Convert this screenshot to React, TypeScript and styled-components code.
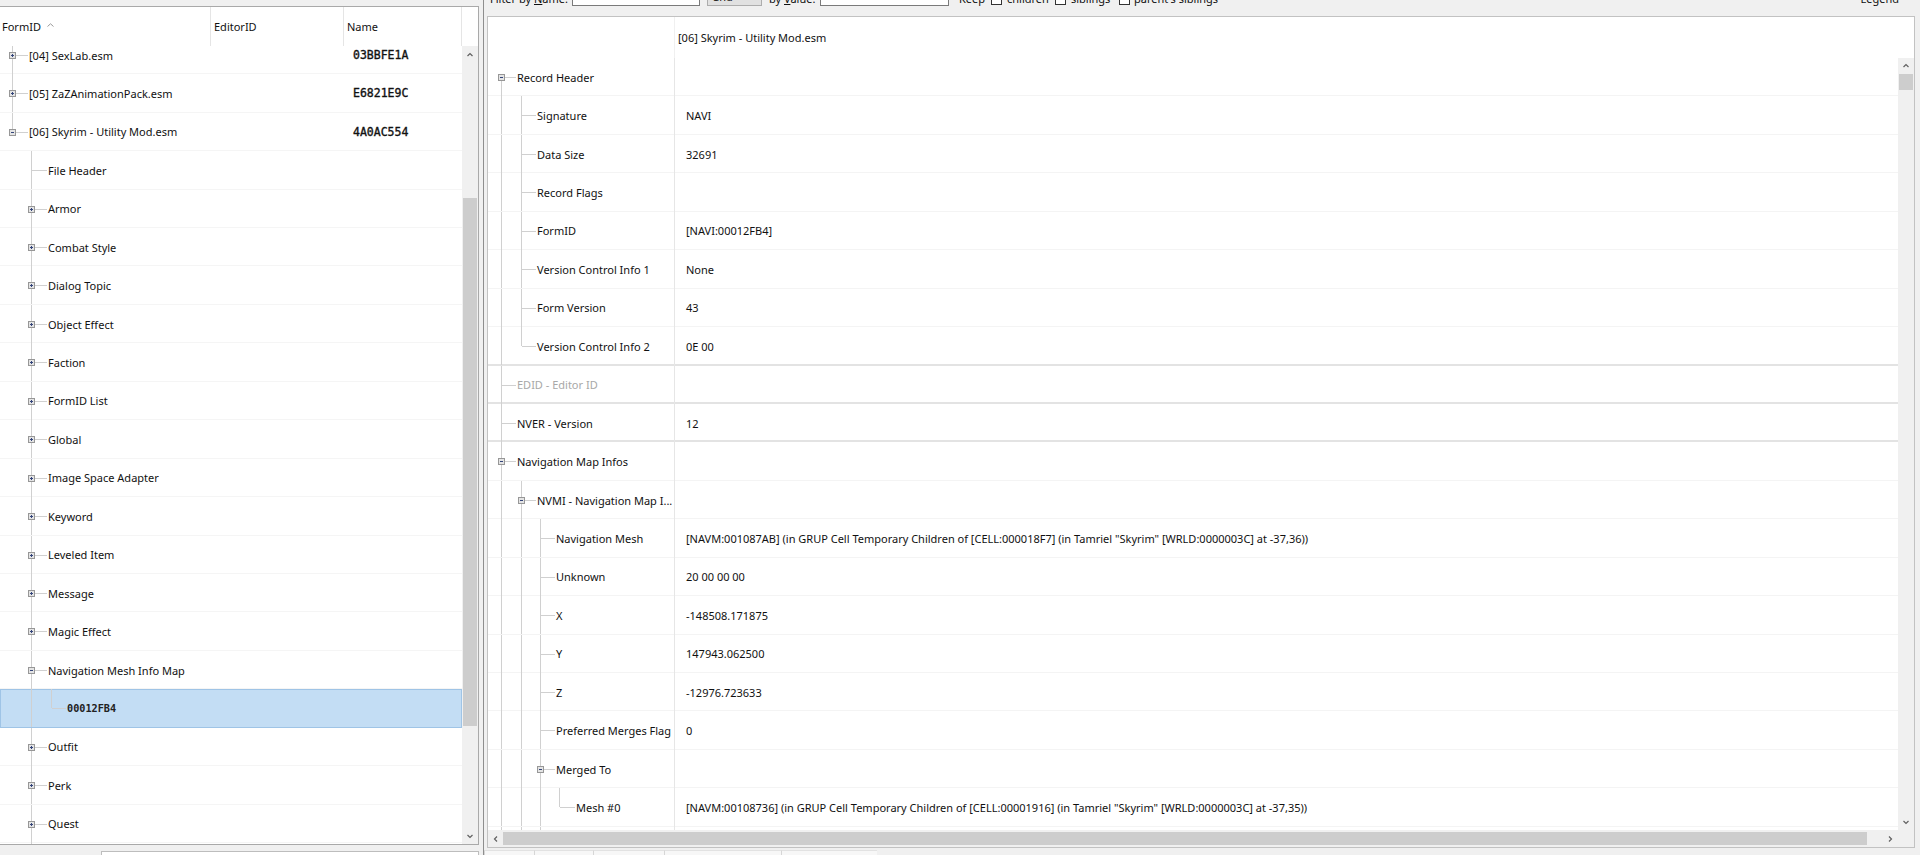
import React from "react";
import styled, { createGlobalStyle, css } from "styled-components";

const ROW = 38.45;
const UI = `"Noto Sans", "Segoe UI", sans-serif`;
const MONO = `"DejaVu Sans Mono", "Liberation Mono", monospace`;

const GlobalStyle = createGlobalStyle`
  * { box-sizing: border-box; }
  html, body { margin: 0; padding: 0; background: #f0f0f0; overflow: hidden; }
  body { font-family: ${UI}; font-size: 11px; color: #111; }
`;

const Window = styled.div`
  display: flex;
  width: 1920px;
  height: 855px;
  overflow: hidden;
  background: #f0f0f0;
`;

/* ---------------- shared bits ---------------- */

type Dir = "up" | "down" | "left" | "right";
const chevronPaths: Record<Dir, string> = {
  up: "M1.5 5 L4 2.5 L6.5 5",
  down: "M1.5 3 L4 5.5 L6.5 3",
  left: "M5 1.5 L2.5 4 L5 6.5",
  right: "M3 1.5 L5.5 4 L3 6.5",
};
const Chevron = ({ dir }: { dir: Dir }) => (
  <svg width="8" height="8" viewBox="0 0 8 8">
    <path d={chevronPaths[dir]} fill="none" stroke="#606060" strokeWidth="1.2" />
  </svg>
);

const VScroll = styled.div<{ $w: number }>`
  width: ${(p) => p.$w}px;
  flex: none;
  display: flex;
  flex-direction: column;
  background: #f0f0f0;
`;
const HScroll = styled.div`
  height: 17px;
  flex: none;
  display: flex;
  background: #f0f0f0;
`;
const ArrowBox = styled.div<{ $size: number; $horiz?: boolean }>`
  flex: none;
  ${(p) => (p.$horiz ? css`width: ${p.$size}px;` : css`height: ${p.$size}px;`)}
  display: flex;
  align-items: center;
  justify-content: center;
`;
const Track = styled.div<{ $horiz?: boolean }>`
  flex: 1;
  min-width: 0;
  min-height: 0;
  display: flex;
  flex-direction: ${(p) => (p.$horiz ? "row" : "column")};
`;
const VThumb = styled.div<{ $offset: number; $len: number }>`
  flex: none;
  margin: ${(p) => p.$offset}px 1px 0 1px;
  height: ${(p) => p.$len}px;
  background: #cdcdcd;
`;
const HThumb = styled.div<{ $offset: number; $len: number }>`
  flex: none;
  margin: 2px 0 2px ${(p) => p.$offset}px;
  width: ${(p) => p.$len}px;
  background: #cdcdcd;
`;
const Corner = styled.div`
  width: 16px;
  flex: none;
  background: #f0f0f0;
`;

/* ---------------- tree connector drawing ---------------- */

const GutterSvg = styled.svg`
  flex: none;
  display: block;
  height: 100%;
  overflow: visible;
`;

type GutterProps = {
  xs: number[];
  tx: number[];
  level: number;
  cont: boolean[];
  last?: boolean;
  first?: boolean;
  box?: "+" | "-";
};

const Gutter = ({ xs, tx, level, cont, last, first, box }: GutterProps) => {
  const w = tx[level];
  const c = xs[level];
  const cx = c + 0.5;
  return (
    <GutterSvg width={w} shapeRendering="crispEdges">
      <g stroke="#d0d0d0" strokeWidth="1">
        {cont.map((on, k) =>
          on ? <line key={k} x1={xs[k] + 0.5} x2={xs[k] + 0.5} y1="0" y2="100%" /> : null
        )}
        {!first && <line x1={cx} x2={cx} y1="0" y2="50%" />}
        {!last && <line x1={cx} x2={cx} y1="50%" y2="100%" />}
      </g>
      <svg x="0" y="50%" overflow="visible">
        <line x1={cx} x2={w - 1.5} y1={0.5} y2={0.5} stroke="#d0d0d0" />
        {box && (
          <g>
            <rect x={c - 2.5} y={-2.5} width={6} height={6} fill="#e4e4e4" stroke="#979797" />
            <line x1={c - 1} x2={c + 2} y1={0.5} y2={0.5} stroke="#34457a" />
            {box === "+" && <line x1={cx} x2={cx} y1={-1} y2={2} stroke="#34457a" />}
          </g>
        )}
      </svg>
    </GutterSvg>
  );
};

/* ---------------- left pane ---------------- */

const LeftPane = styled.div`
  width: 479px;
  flex: none;
  display: flex;
  flex-direction: column;
  padding-top: 6px;
`;
const ListFrame = styled.div`
  height: 839px;
  flex: none;
  display: flex;
  flex-direction: column;
  background: #fff;
  border: 1px solid #a9a9a9;
  border-left: 0;
`;
const ColHeader = styled.div`
  height: 39px;
  flex: none;
  display: flex;
`;
const HeadCell = styled.div<{ $w: number; $pad?: number }>`
  width: ${(p) => p.$w}px;
  flex: none;
  display: flex;
  align-items: center;
  padding-left: ${(p) => p.$pad ?? 3}px;
  border-right: 1px solid #e5e5e5;
  color: #111;
  white-space: nowrap;
`;
const SortMark = styled.svg`
  margin-left: 6px;
  margin-top: -3px;
`;
const ListBody = styled.div`
  flex: 1;
  min-height: 0;
  display: flex;
`;
const Viewport = styled.div<{ $w: number }>`
  width: ${(p) => p.$w}px;
  flex: none;
  overflow: hidden;
`;
const Scrolled = styled.div<{ $offset: number }>`
  margin-top: ${(p) => -p.$offset}px;
`;

const sepLine = (color: string, w: number) => css`
  background-image: linear-gradient(${color}, ${color});
  background-size: 100% ${w}px;
  background-position: 0 100%;
  background-repeat: no-repeat;
`;

const LRow = styled.div<{ $sel?: boolean }>`
  height: ${ROW}px;
  display: flex;
  ${sepLine("#f5f5f5", 1)}
  ${(p) =>
    p.$sel &&
    css`
      background-color: #c3ddf4;
      background-image: none;
      box-shadow: inset 0 0 0 1px #9fc4e6;
    `}
`;
const LTreeCell = styled.div`
  width: 344px;
  flex: none;
  display: flex;
  overflow: hidden;
`;
const LLabel = styled.span<{ $mono?: boolean }>`
  align-self: center;
  white-space: nowrap;
  ${(p) =>
    p.$mono &&
    css`
      font-family: ${MONO};
      font-size: 10.2px;
      font-weight: 700;
      color: #222;
    `}
`;
const LNameCell = styled.div`
  flex: 1;
  display: flex;
  align-items: center;
  padding-left: 9px;
  font-family: ${MONO};
  font-size: 11.5px;
  font-weight: 400;
  color: #111;
  -webkit-text-stroke: 0.35px #111;
`;

const LeftFooter = styled.div`
  flex: 1;
  padding: 6px 0 0 101px;
`;
const FooterInput = styled.div`
  height: 100%;
  border: 1px solid #bdbdbd;
  border-bottom: 0;
  background: #fff;
`;

const Splitter = styled.div`
  width: 4px;
  flex: none;
`;

/* ---------------- right pane ---------------- */

const RightPane = styled.div`
  flex: 1;
  display: flex;
  flex-direction: column;
  border-left: 1px solid #8e8e8e;
`;
const Toolbar = styled.div`
  height: 16px;
  flex: none;
  overflow: hidden;
  display: flex;
  align-items: flex-end;
  padding: 0 21px 0 6px;
`;
const TLabel = styled.span<{ $w?: number; $ml?: number }>`
  flex: none;
  ${(p) => p.$w && css`width: ${p.$w}px;`}
  margin-left: ${(p) => p.$ml ?? 0}px;
  line-height: 16px;
  margin-bottom: 9px;
  white-space: nowrap;
  color: #111;
`;
const TInput = styled.div<{ $w: number; $ml: number }>`
  flex: none;
  width: ${(p) => p.$w}px;
  margin-left: ${(p) => p.$ml}px;
  height: 21px;
  margin-bottom: 10px;
  border: 1px solid #7a7a7a;
  background: #fff;
`;
const TCombo = styled.div<{ $w: number; $ml: number }>`
  flex: none;
  width: ${(p) => p.$w}px;
  margin-left: ${(p) => p.$ml}px;
  height: 21px;
  margin-bottom: 10px;
  border: 1px solid #adadad;
  background: #e1e1e1;
  padding: 4px 0 0 5px;
  line-height: 14px;
  color: #111;
`;
const TCheck = styled.span<{ $ml: number }>`
  flex: none;
  width: 11px;
  height: 11px;
  margin-left: ${(p) => p.$ml}px;
  margin-bottom: 11px;
  border: 1px solid #333;
  background: #fff;
`;
const Legend = styled.span`
  flex: none;
  margin-left: auto;
  line-height: 16px;
  margin-bottom: 9px;
  color: #111;
`;

const TreeFrame = styled.div`
  height: 832px;
  flex: none;
  margin: 0 5px 0 3px;
  border: 1px solid #c2c2c2;
  background: #fff;
  display: flex;
  flex-direction: column;
`;
const TreeHeader = styled.div`
  height: 41px;
  flex: none;
  display: flex;
`;
const THLabel = styled.div`
  width: 186px;
  flex: none;
`;
const THValue = styled.div`
  flex: 1;
  display: flex;
  align-items: center;
  padding-left: 3px;
  border-left: 1px solid #f0f0f0;
  white-space: nowrap;
`;
const TreeBody = styled.div`
  height: 772px;
  flex: none;
  display: flex;
`;
const RRow = styled.div<{ $root?: boolean }>`
  height: ${ROW}px;
  display: flex;
  ${(p) => (p.$root ? sepLine("#e3e3e3", 2) : sepLine("#f4f4f4", 1))}
`;
const RLabelCell = styled.div`
  width: 186px;
  flex: none;
  display: flex;
  overflow: hidden;
`;
const RLabel = styled.span<{ $muted?: boolean }>`
  align-self: center;
  white-space: nowrap;
  color: ${(p) => (p.$muted ? "#a8a8a8" : "#111")};
`;
const RValueCell = styled.div`
  flex: 1;
  display: flex;
  align-items: center;
  padding-left: 11px;
  border-left: 1px solid #e6e6e6;
  white-space: nowrap;
  overflow: hidden;
`;

const TabStrip = styled.div`
  flex: 1;
  display: flex;
  padding-top: 2px;
`;
const TabItem = styled.div<{ $w: number }>`
  width: ${(p) => p.$w}px;
  flex: none;
  border-left: 1px solid #d6d6d6;
  border-top: 1px solid #e2e2e2;
  background: #f7f7f7;
`;

/* ---------------- data ---------------- */

type LeftItem = {
  level: number;
  label: string;
  box?: "+" | "-";
  hex?: string;
  mono?: boolean;
  selected?: boolean;
  cont: boolean[];
  last?: boolean;
};

const L1 = (label: string, box?: "+" | "-"): LeftItem => ({ level: 1, label, box, cont: [false] });

const leftRows: LeftItem[] = [
  { level: 0, label: "[04] SexLab.esm", box: "+", hex: "03BBFE1A", cont: [] },
  { level: 0, label: "[05] ZaZAnimationPack.esm", box: "+", hex: "E6821E9C", cont: [] },
  { level: 0, label: "[06] Skyrim - Utility Mod.esm", box: "-", hex: "4A0AC554", cont: [], last: true },
  L1("File Header"),
  L1("Armor", "+"),
  L1("Combat Style", "+"),
  L1("Dialog Topic", "+"),
  L1("Object Effect", "+"),
  L1("Faction", "+"),
  L1("FormID List", "+"),
  L1("Global", "+"),
  L1("Image Space Adapter", "+"),
  L1("Keyword", "+"),
  L1("Leveled Item", "+"),
  L1("Message", "+"),
  L1("Magic Effect", "+"),
  L1("Navigation Mesh Info Map", "-"),
  { level: 2, label: "00012FB4", mono: true, selected: true, cont: [false, true], last: true },
  L1("Outfit", "+"),
  L1("Perk", "+"),
  L1("Quest", "+"),
  L1("", "+"),
];

type RightItem = {
  level: number;
  label: string;
  value?: string;
  box?: "+" | "-";
  cont: boolean[];
  last?: boolean;
  first?: boolean;
  muted?: boolean;
  root?: boolean;
};

const R1 = (label: string, value: string, extra: Partial<RightItem> = {}): RightItem => ({
  level: 1,
  label,
  value,
  cont: [true],
  ...extra,
});
const R2 = (label: string, value: string, extra: Partial<RightItem> = {}): RightItem => ({
  level: 2,
  label,
  value,
  cont: [true, true],
  ...extra,
});

const rightRows: RightItem[] = [
  { level: 0, label: "Record Header", box: "-", cont: [], first: true },
  R1("Signature", "NAVI"),
  R1("Data Size", "32691"),
  R1("Record Flags", ""),
  R1("FormID", "[NAVI:00012FB4]"),
  R1("Version Control Info 1", "None"),
  R1("Form Version", "43"),
  R1("Version Control Info 2", "0E 00", { last: true, root: true }),
  { level: 0, label: "EDID - Editor ID", value: "", cont: [], muted: true, root: true },
  { level: 0, label: "NVER - Version", value: "12", cont: [], root: true },
  { level: 0, label: "Navigation Map Infos", box: "-", cont: [] },
  R1("NVMI - Navigation Map I...", "", { box: "-" }),
  R2(
    "Navigation Mesh",
    '[NAVM:001087AB] (in GRUP Cell Temporary Children of [CELL:000018F7] (in Tamriel "Skyrim" [WRLD:0000003C] at -37,36))'
  ),
  R2("Unknown", "20 00 00 00"),
  R2("X", "-148508.171875"),
  R2("Y", "147943.062500"),
  R2("Z", "-12976.723633"),
  R2("Preferred Merges Flag", "0"),
  R2("Merged To", "", { box: "-" }),
  {
    level: 3,
    label: "Mesh #0",
    value:
      '[NAVM:00108736] (in GRUP Cell Temporary Children of [CELL:00001916] (in Tamriel "Skyrim" [WRLD:0000003C] at -37,35))',
    cont: [true, true, true],
    last: true,
  },
  R2("", "", { box: "+" }),
];

const LX = [12, 31, 51, 70];
const LT = [29, 48, 67, 86];
const RX = [13, 33, 52, 71];
const RT = [29, 49, 68, 88];

/* ---------------- app ---------------- */

export default function App() {
  return (
    <>
      <GlobalStyle />
      <Window>
        <LeftPane>
          <ListFrame>
            <ColHeader>
              <HeadCell $w={211} $pad={2}>
                FormID
                <SortMark width="7" height="4" viewBox="0 0 7 4">
                  <path d="M0.5 3.5 L3.5 0.8 L6.5 3.5" fill="none" stroke="#9a9a9a" strokeWidth="1" />
                </SortMark>
              </HeadCell>
              <HeadCell $w={133}>EditorID</HeadCell>
              <HeadCell $w={118}>Name</HeadCell>
            </ColHeader>
            <ListBody>
              <Viewport $w={462}>
                <Scrolled $offset={10.2}>
                  {leftRows.map((r, i) => (
                    <LRow key={i} $sel={r.selected}>
                      <LTreeCell>
                        <Gutter xs={LX} tx={LT} level={r.level} cont={r.cont} last={r.last} box={r.box} />
                        <LLabel $mono={r.mono}>{r.label}</LLabel>
                      </LTreeCell>
                      <LNameCell>{r.hex}</LNameCell>
                    </LRow>
                  ))}
                </Scrolled>
              </Viewport>
              <VScroll $w={16}>
                <ArrowBox $size={17}>
                  <Chevron dir="up" />
                </ArrowBox>
                <Track>
                  <VThumb $offset={135} $len={528} />
                </Track>
                <ArrowBox $size={17}>
                  <Chevron dir="down" />
                </ArrowBox>
              </VScroll>
            </ListBody>
          </ListFrame>
          <LeftFooter>
            <FooterInput />
          </LeftFooter>
        </LeftPane>

        <Splitter />

        <RightPane>
          <Toolbar>
            <TLabel $w={76}>
              Filter by <u>N</u>ame:
            </TLabel>
            <TInput $w={128} $ml={6} />
            <TCombo $w={55} $ml={7}>and</TCombo>
            <TLabel $w={45} $ml={7}>
              by <u>V</u>alue:
            </TLabel>
            <TInput $w={129} $ml={6} />
            <TLabel $w={26} $ml={10}>Keep</TLabel>
            <TCheck $ml={6} />
            <TLabel $w={40} $ml={5}>children</TLabel>
            <TCheck $ml={8} />
            <TLabel $w={38} $ml={5}>siblings</TLabel>
            <TCheck $ml={10} />
            <TLabel $ml={4}>parent's siblings</TLabel>
            <Legend>Legend</Legend>
          </Toolbar>

          <TreeFrame>
            <TreeHeader>
              <THLabel />
              <THValue>[06] Skyrim - Utility Mod.esm</THValue>
            </TreeHeader>
            <TreeBody>
              <Viewport $w={1410}>
                {rightRows.map((r, i) => (
                  <RRow key={i} $root={r.root}>
                    <RLabelCell>
                      <Gutter
                        xs={RX}
                        tx={RT}
                        level={r.level}
                        cont={r.cont}
                        last={r.last}
                        first={r.first}
                        box={r.box}
                      />
                      <RLabel $muted={r.muted}>{r.label}</RLabel>
                    </RLabelCell>
                    <RValueCell>{r.value}</RValueCell>
                  </RRow>
                ))}
              </Viewport>
              <VScroll $w={16}>
                <ArrowBox $size={16}>
                  <Chevron dir="up" />
                </ArrowBox>
                <Track>
                  <VThumb $offset={0} $len={16} />
                </Track>
                <ArrowBox $size={17}>
                  <Chevron dir="down" />
                </ArrowBox>
              </VScroll>
            </TreeBody>
            <HScroll>
              <ArrowBox $size={15} $horiz>
                <Chevron dir="left" />
              </ArrowBox>
              <Track $horiz>
                <HThumb $offset={0} $len={1364} />
              </Track>
              <ArrowBox $size={16} $horiz>
                <Chevron dir="right" />
              </ArrowBox>
              <Corner />
            </HScroll>
          </TreeFrame>
          <TabStrip>
            <TabItem $w={50} />
            <TabItem $w={59} />
            <TabItem $w={71} />
            <TabItem $w={117} />
            <TabItem $w={96} />
          </TabStrip>
        </RightPane>
      </Window>
    </>
  );
}
